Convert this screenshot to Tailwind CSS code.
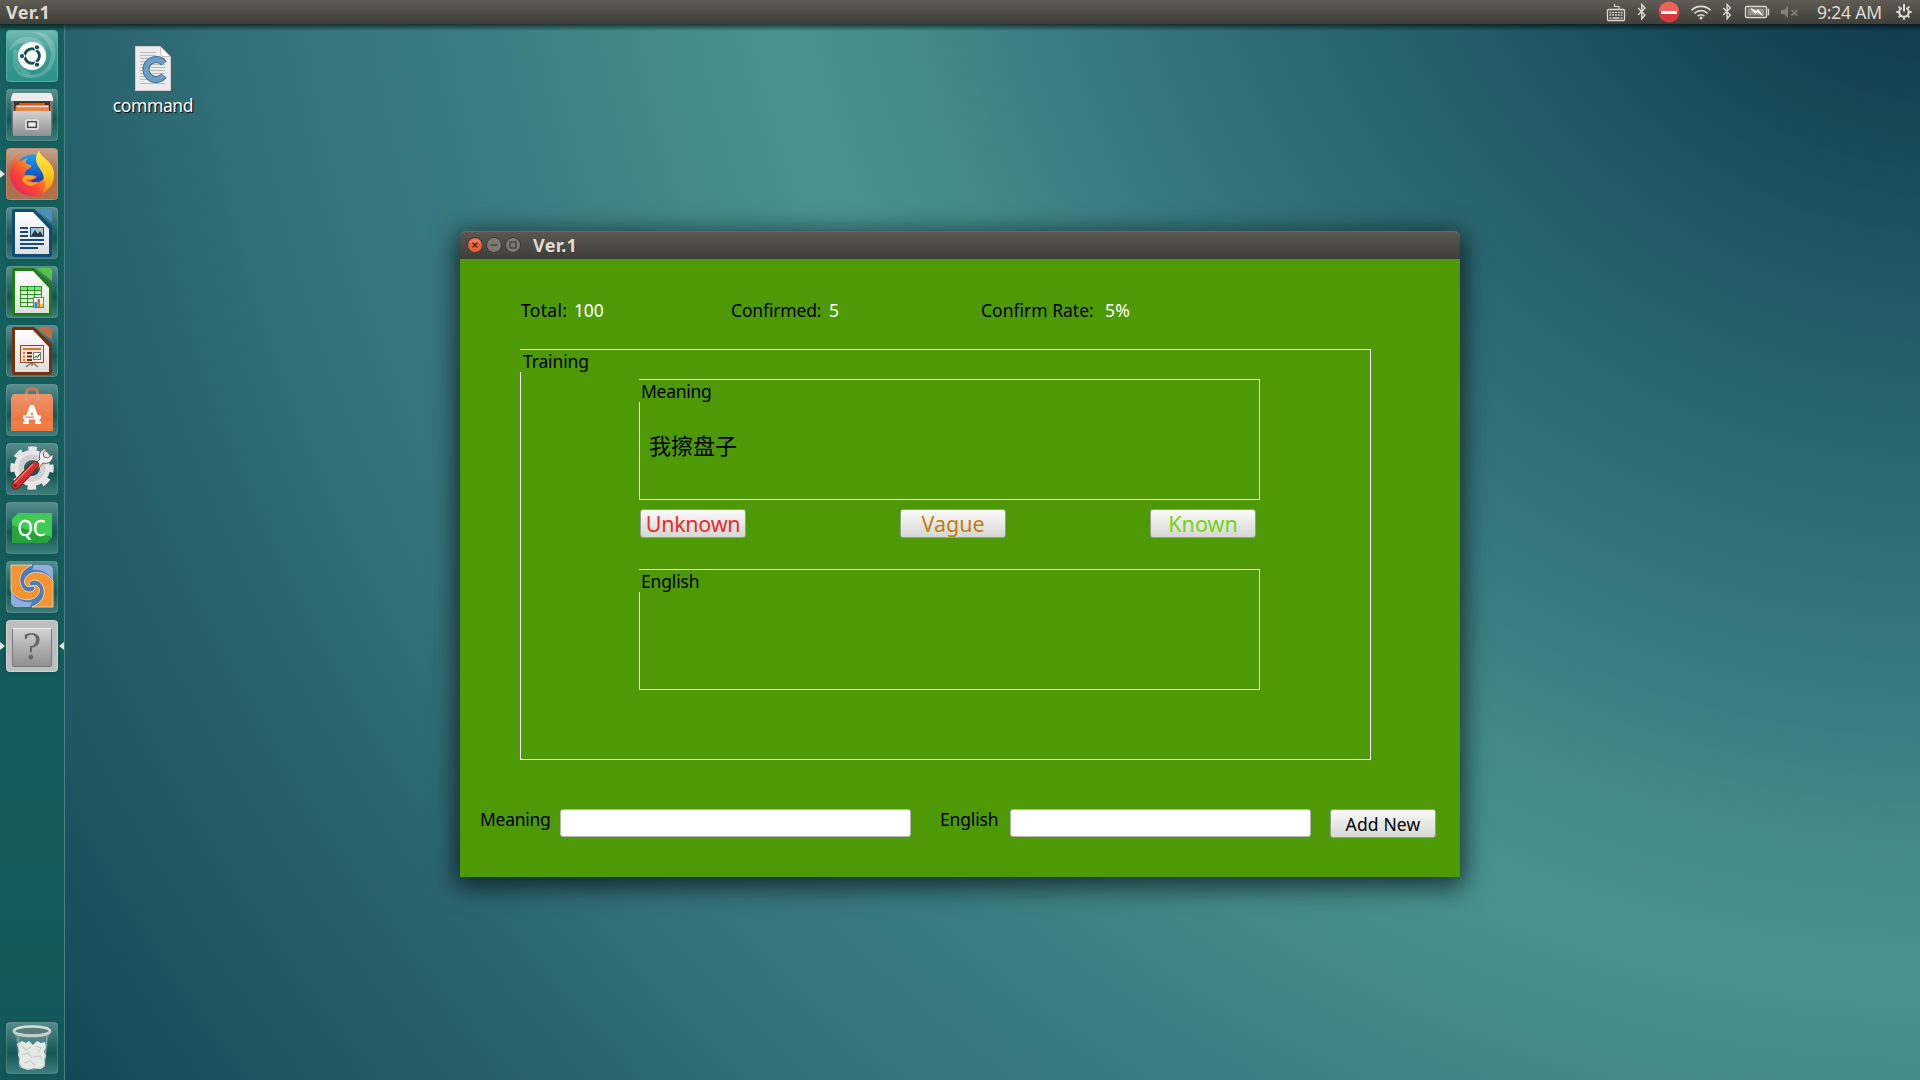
<!DOCTYPE html>
<html lang="en">
<head>
<meta charset="utf-8">
<title>Ver.1</title>
<script src="https://cdn.jsdelivr.net/npm/@tailwindcss/browser@4"></script>
</head>
<body class="w-[1920px] h-[1080px] overflow-hidden flex flex-col font-['Noto_Sans','Noto_Sans_CJK_SC',sans-serif] text-[17.5px] leading-5 text-black bg-[radial-gradient(circle_at_1953px_-218px,#113e4f_250px,#164856_350px,#1e5563_470px,#26616b_600px,#2f6c73_745px,#3a7d81_936px,#428987_1050px,#48938f_1196px,#438a88_1330px,#3a7c80_1513px,#34727a_1716px,#28626c_1905px,#205862_2080px,#1a505e_2184px,#144857_2292px)]">

<header class="h-6 shrink-0 flex items-center justify-between pl-[6px] pr-[8px] bg-gradient-to-b from-[#5e5c53] to-[#3f3e3a] text-[#dfdbd2]">
  <span class="font-bold text-[18px] tracking-[0.3px]">Ver.1</span>
  <div class="flex items-center h-6">
    <svg class="w-[310px] h-6" viewBox="1590 0 310 24" fill="none">
      <g stroke="#dfdbd2">
        <path d="M1614.500 4v2.500h4.500v3" stroke-width="1.200"/>
        <rect x="1607.500" y="9.500" width="17" height="11" rx="1" stroke-width="1.300"/>
        <path d="M1609.500 12.500h13M1609.500 15h13" stroke-width="1.600" stroke-dasharray="1.800 1"/>
        <path d="M1609.500 18h2M1612.500 18h7M1620.500 18h2" stroke-width="1.500"/>
        <path d="M1638 8l7 7-3.200 3.800V4.500l3.200 3.500-7 7" stroke-width="1.400"/>
        <path d="M1723.300 8l7 7-3.200 3.800V4.500l3.200 3.500-7 7" stroke-width="1.400"/>
      </g>
      <circle cx="1669" cy="12" r="10.500" fill="#d93a37"/>
      <path d="M1659 11a10 9.500 0 0 1 20 0z" fill="#ef7568" opacity=".7"/>
      <rect x="1661" y="11" width="16" height="3" fill="#fff"/>
      <g stroke="#dfdbd2" stroke-width="1.700">
        <path d="M1691.500 10.300a13.500 13.500 0 0 1 19 0M1694.500 13.300a9.300 9.300 0 0 1 13 0M1697.600 16.200a5 5 0 0 1 6.800 0"/>
      </g>
      <circle cx="1701" cy="18" r="1.500" fill="#dfdbd2"/>
      <rect x="1745.500" y="6.500" width="21" height="11" rx="1.500" stroke="#dfdbd2" stroke-width="1.400"/>
      <path d="M1767.500 9.500h1v5h-1" stroke="#dfdbd2" stroke-width="1.300"/>
      <rect x="1747.500" y="8.500" width="17" height="7" fill="#96938b"/>
      <path d="M1751 8.500l4.500 5 1.500-2 5.500 4-4.500-6-1.500 2z" fill="#fff" stroke="#fff" stroke-width=".8"/>
      <path d="M1781 10h3l4-4v12l-4-4h-3z" fill="#85827b"/>
      <path d="M1791.500 10l5.500 5.500m0-5.500l-5.500 5.500" stroke="#85827b" stroke-width="1.700"/>
    </svg>
    <span class="-ml-[83px] w-[79px] text-[17.5px] tracking-[-0.2px] whitespace-nowrap">9:24 AM</span>
    <svg class="w-4 h-4" viewBox="0 0 16 16" fill="none" stroke="#dfdbd2">
      <path d="M5.700 3.800a4.800 4.800 0 1 0 4.600 0" stroke-width="2"/>
      <path d="M8 0v7.500" stroke-width="2"/>
      <path d="M4.200 4.200L2.600 2.600m9.200 1.600l1.600-1.600M3 8H.3m12.700 0h2.700M4.500 11.500L2.700 13.300m8.800-1.800l1.800 1.800M8 13v2.700" stroke-width="1.900"/>
    </svg>
  </div>
</header>

<main class="flex-1 min-h-0 flex">
  <div class="absolute top-6 left-0 w-full h-[7px] bg-gradient-to-b from-black/60 to-transparent"></div>

  <nav class="w-[65px] shrink-0 border-r border-[#4a8186] bg-gradient-to-b from-[#16615f] to-[#125858] flex flex-col pt-[6px] pb-[6px] pl-[6px] gap-[7px]">
    <svg width="0" height="0" class="absolute">
      <defs>
        <linearGradient id="tile" x1="0" y1="0" x2="0" y2="1"><stop offset="0" stop-color="#6fa09f" stop-opacity=".75"/><stop offset=".42" stop-color="#276a6b" stop-opacity=".8"/><stop offset=".6" stop-color="#155553"/><stop offset="1" stop-color="#3d7f7d"/></linearGradient>
        <linearGradient id="dash" x1="0" y1="0" x2="0" y2="1"><stop offset="0" stop-color="#74b9b3"/><stop offset=".45" stop-color="#3b9c94"/><stop offset="1" stop-color="#2b9389"/></linearGradient>
        <linearGradient id="fox" x1="0" y1="0" x2="0" y2="1"><stop offset="0" stop-color="#c7a493"/><stop offset=".45" stop-color="#ac6f4f"/><stop offset="1" stop-color="#b0704b"/></linearGradient>
        <linearGradient id="metal" x1="0" y1="0" x2="0" y2="1"><stop offset="0" stop-color="#d2d2d2"/><stop offset="1" stop-color="#8f8f8f"/></linearGradient>
        <linearGradient id="page" x1="0" y1="0" x2="0" y2="1"><stop offset="0" stop-color="#fff"/><stop offset="1" stop-color="#dedede"/></linearGradient>
        <linearGradient id="foxbody" x1="1" y1="0" x2="0" y2="1"><stop offset="0" stop-color="#ffd83a"/><stop offset=".35" stop-color="#ff9a1f"/><stop offset=".65" stop-color="#fb4236"/><stop offset="1" stop-color="#d81b78"/></linearGradient>
        <linearGradient id="globe" x1="0" y1="0" x2="0" y2="1"><stop offset="0" stop-color="#1aa0f5"/><stop offset=".6" stop-color="#1258c8"/><stop offset="1" stop-color="#34158a"/></linearGradient>
        <linearGradient id="flame" x1="0" y1="0" x2="0" y2="1"><stop offset="0" stop-color="#fff04a"/><stop offset=".6" stop-color="#ffc41e"/><stop offset="1" stop-color="#ff8f1c"/></linearGradient>
        <linearGradient id="bag" x1="0" y1="0" x2="0" y2="1"><stop offset="0" stop-color="#f09468"/><stop offset="1" stop-color="#ea6a35"/></linearGradient>
      </defs>
    </svg>

    <!-- Dash -->
    <svg class="w-[52px] h-[52px] shrink-0 drop-shadow-sm" viewBox="0 0 52 52">
      <rect x=".5" y=".5" width="51" height="51" rx="3" fill="url(#dash)" stroke="#5db0a8"/>
      <path d="M3 22C6 9 18 4 29 8c10 4 14 15 10 26-1-10-5-17-14-20C16 11 8 14 3 22z" fill="#fff" opacity=".2"/>
      <path d="M8 24c-3 12 6 22 19 21 10-1 17-8 18-20C44 12 36 4 26 2c18-1 26 12 23 26-2 12-12 20-24 20C12 48 4 37 8 24z" fill="#fff" opacity=".2"/>
      <path d="M10 20c-2 10 2 20 14 25" stroke="#fff" stroke-opacity=".16" stroke-width="5" fill="none"/>
      <circle cx="26" cy="26" r="14" fill="#fff"/>
      <circle cx="26" cy="26" r="7.300" fill="none" stroke="#185351" stroke-width="3"/>
      <path d="M26 26H17M26 26l5-9M26 26l5 9" stroke="#fff" stroke-width="1.200"/>
      <g fill="#185351" stroke="#fff"><circle cx="16" cy="26" r="2.600"/><circle cx="31" cy="17.300" r="2.600"/><circle cx="31" cy="34.700" r="2.600"/></g>
      <circle cx="26" cy="26" r="5.500" fill="#fff"/>
    </svg>

    <!-- Files -->
    <svg class="w-[52px] h-[52px] shrink-0 drop-shadow-sm" viewBox="0 0 52 52">
      <rect x=".5" y=".5" width="51" height="51" rx="3" fill="url(#tile)" stroke="#fff" stroke-opacity=".2"/>
      <path d="M5 8h42l-1 36H6z" fill="#777"/>
      <path d="M7 4h38l2 5v3H5V9z" fill="#ececec"/>
      <path d="M8 12h36v12H8z" fill="#3e3937"/>
      <path d="M13 14h26v3H13z" fill="#cf5b1e"/><path d="M10 16h33v8H9z" fill="#e9833f"/><path d="M11 17.500h31" stroke="#fbe3cf" stroke-width="1.300"/>
      <rect x="7" y="22" width="38" height="25" fill="url(#metal)"/>
      <rect x="19" y="30" width="14" height="11" rx="2" fill="#d9d9d9"/>
      <rect x="21.700" y="32.700" width="8.600" height="5.600" fill="#eee" stroke="#444" stroke-width="1.300"/>
    </svg>

    <!-- Firefox -->
    <div class="relative w-[52px] h-[52px] shrink-0">
      <svg class="absolute -left-[6px] top-[22px] w-[5px] h-2" viewBox="0 0 5 8"><path d="M0 0l5 4-5 4z" fill="#dfe3e1"/></svg>
      <svg class="w-[52px] h-[52px] drop-shadow-sm" viewBox="0 0 52 52">
        <rect x=".5" y=".5" width="51" height="51" rx="3" fill="url(#fox)" stroke="#bd8d73"/>
        <circle cx="27" cy="24" r="17.500" fill="url(#globe)"/>
        <path d="M5 20c0-5 2-9 6-12 0 3 1 5 2 6 3-2 6-3 9-4-2 2-3 4-2 6l5 1c1 2-2 4-5 5 0 3-2 3-1 5 3 3 8-1 11 1 2 2-3 4-6 4 5 5 14 2 15-5 1-9-7-13-6-20 9 5 14 10 15 20 0 12-9 21-21 21C14 48 4 38 4 26z" fill="url(#foxbody)"/>
        <path d="M33 3c2 7 14 10 15 22 0 9-5 16-12 20 5-6 4-11 2-14-1-10-8-12-8-20 0-3 1-6 3-8z" fill="url(#flame)"/>
        <path d="M18 28c4-2 8-1 11 1-2 3-6 2-9 3 3 3 8 4 12 1-3 7-12 6-16-1z" fill="#ffa424"/>
      </svg>
    </div>

    <!-- Writer -->
    <svg class="w-[52px] h-[52px] shrink-0 drop-shadow-sm" viewBox="0 0 52 52">
      <rect x=".5" y=".5" width="51" height="51" rx="3" fill="url(#tile)" stroke="#fff" stroke-opacity=".2"/>
      <path d="M6 4q0-2 2-2h20l18 17v28q0 3-3 3H9q-3 0-3-3z" fill="#0f4a79"/>
      <path d="M30 2h14q2 0 2 2v11z" fill="#4a8dbf"/>
      <path d="M9 5h18l16 17v25H9z" fill="url(#page)"/>
      <path d="M14 21h8M14 25h8M14 29h8M14 33h24M14 37h24M14 41h18" stroke="#1a4b78" stroke-width="2"/>
      <rect x="24.500" y="20.500" width="13" height="9" fill="#92c6ea" stroke="#1a4b78"/><path d="M25 29l4-6 3 4 2-3 3 5z" fill="#333"/><circle cx="35.500" cy="22.500" r="1.500" fill="#e9c43c"/>
    </svg>

    <!-- Calc -->
    <svg class="w-[52px] h-[52px] shrink-0 drop-shadow-sm" viewBox="0 0 52 52">
      <rect x=".5" y=".5" width="51" height="51" rx="3" fill="url(#tile)" stroke="#fff" stroke-opacity=".2"/>
      <path d="M6 4q0-2 2-2h20l18 17v28q0 3-3 3H9q-3 0-3-3z" fill="#1d7d12"/>
      <path d="M30 2h14q2 0 2 2v11z" fill="#55c241"/>
      <path d="M9 5h18l16 17v25H9z" fill="url(#page)"/>
      <rect x="14" y="20" width="22" height="21" fill="#1e9a10"/>
      <path d="M15 22.500h20" stroke="#8fdd86" stroke-width="3" stroke-dasharray="6 1"/>
      <path d="M15 26.500h20M15 30.500h20M15 34.500h20M15 38.500h20" stroke="#e6f7e3" stroke-width="3" stroke-dasharray="6 1"/>
      <rect x="27.500" y="31.500" width="10" height="10" fill="#fff" stroke="#777"/><path d="M28.500 36h2.700v5h-2.700z" fill="#2b86d1"/><path d="M31.500 33h2.700v8h-2.700z" fill="#e36a26"/><path d="M34.500 38h2.500v3h-2.500z" fill="#f0bd17"/>
    </svg>

    <!-- Impress -->
    <svg class="w-[52px] h-[52px] shrink-0 drop-shadow-sm" viewBox="0 0 52 52">
      <rect x=".5" y=".5" width="51" height="51" rx="3" fill="url(#tile)" stroke="#fff" stroke-opacity=".2"/>
      <path d="M6 4q0-2 2-2h20l18 17v28q0 3-3 3H9q-3 0-3-3z" fill="#7a2f0c"/>
      <path d="M30 2h14q2 0 2 2v11z" fill="#c56a44"/>
      <path d="M9 5h18l16 17v25H9z" fill="url(#page)"/>
      <rect x="14.500" y="20.500" width="23" height="17" fill="#f8e6da" stroke="#9a4416"/>
      <path d="M17 24h18" stroke="#e0702f" stroke-width="2"/>
      <path d="M17 28h2M17 31.500h2M17 35h2" stroke="#e0702f" stroke-width="2"/><path d="M21 28h5M21 31.500h5M21 35h5" stroke="#7a2f0c" stroke-width="2"/>
      <rect x="27.500" y="27.500" width="7" height="7" fill="#fff" stroke="#777"/><path d="M28.500 33l2-2 1 1 2.500-3" stroke="#2a9a28" stroke-width="1.200" fill="none"/>
      <path d="M26 38v3M25 38l-5 4M27 38l5 4" stroke="#777" stroke-width="1.600"/>
    </svg>

    <!-- Software centre -->
    <svg class="w-[52px] h-[52px] shrink-0 drop-shadow-sm" viewBox="0 0 52 52">
      <rect x=".5" y=".5" width="51" height="51" rx="3" fill="url(#tile)" stroke="#fff" stroke-opacity=".2"/>
      <path d="M20.500 17V9q0-4 4-4h3q4 0 4 4v8" fill="none" stroke="#d07550" stroke-width="3"/>
      <path d="M7 10h38l2 4v33H5V14z" fill="url(#bag)"/>
      <path d="M5 37h42v10H5z" fill="#f9824a" opacity=".6"/>
      <path d="M20.500 17V10M31.500 17V10" stroke="#e89a7c" stroke-width="3"/>
      <path d="M20 38l5.500-15h1L32 38" stroke="#fff" stroke-width="4" fill="none"/>
      <rect x="17" y="31" width="18" height="4.500" rx="2" fill="#fff"/><path d="M19 33.200h9" stroke="#eb7340" stroke-width="1.200"/>
      <path d="M17 38.800h6M29 38.800h6" stroke="#fff" stroke-width="2.500"/>
    </svg>

    <!-- Settings -->
    <svg class="w-[52px] h-[52px] shrink-0 drop-shadow-sm" viewBox="0 0 52 52">
      <rect x=".5" y=".5" width="51" height="51" rx="3" fill="url(#tile)" stroke="#fff" stroke-opacity=".2"/>
      <circle cx="26" cy="25" r="19.500" fill="none" stroke="#e6e6e6" stroke-width="4.500" stroke-dasharray="8.700 6.615" stroke-dashoffset="4.350"/>
      <circle cx="26" cy="25" r="13" fill="none" stroke="#e6e6e6" stroke-width="10"/>
      <circle cx="26" cy="25" r="11" fill="none" stroke="#cfcfcf" stroke-width="5"/>
      <path d="M28 22l6-6c-2-5 1-10 7-11l-4 5 1 4 4 1 5-4c1 6-4 11-10 9l-5 6z" fill="#f2f2f2" stroke="#555" stroke-width=".9"/>
      <path d="M9.500 42.500L29 22" stroke="#871a1a" stroke-width="8.500" stroke-linecap="round"/>
      <path d="M9.500 42.500L29 22" stroke="#d03232" stroke-width="6.500" stroke-linecap="round"/>
      <path d="M9 39.500L26.500 21.500" stroke="#ee7774" stroke-width="1.500" stroke-linecap="round"/>
      <circle cx="9.500" cy="42.500" r="1.300" fill="#541010"/>
    </svg>

    <!-- Qt Creator -->
    <svg class="w-[52px] h-[52px] shrink-0 drop-shadow-sm" viewBox="0 0 52 52">
      <rect x=".5" y=".5" width="51" height="51" rx="3" fill="url(#tile)" stroke="#fff" stroke-opacity=".2"/>
      <path d="M12 11h34v24l-6 6H6V17z" fill="#3fcb53"/>
      <path d="M6 23l40 12-6 6H6z" fill="#25a43b"/>
      <text x="11.500" y="33.700" font-family="Noto Sans" font-size="21" fill="#fff" stroke="#fff" stroke-width=".3" textLength="28" lengthAdjust="spacingAndGlyphs">QC</text>
    </svg>

    <!-- Swirl -->
    <svg class="w-[52px] h-[52px] shrink-0 drop-shadow-sm" viewBox="0 0 52 52">
      <rect x=".5" y=".5" width="51" height="51" rx="3" fill="url(#tile)" stroke="#fff" stroke-opacity=".2"/>
      <path d="M5 4h36q6 0 6 6v36H11q-6 0-6-6z" fill="#4d7cbb"/>
      <path d="M28 4h13q6 0 6 6v10C43 12 36 8 26 9zM5 30c4 8 11 12 21 11l-2 5H11q-6 0-6-6z" fill="#8fb0dc"/>
      <g fill="#f5932f" stroke="#f8dfc0" stroke-width=".8">
        <path d="M5 4H26C17 8 13 14 14 21C15 29 22 33 27 30C30 28 29 25 26 25C33 22 36 30 31 35C25 41 12 40 5 30Z"/>
        <path transform="rotate(180 26 25)" d="M5 4H26C17 8 13 14 14 21C15 29 22 33 27 30C30 28 29 25 26 25C33 22 36 30 31 35C25 41 12 40 5 30Z"/>
      </g>
    </svg>

    <!-- Unknown running program -->
    <div class="relative w-[52px] h-[52px] shrink-0">
      <svg class="absolute -left-[6px] top-[22px] w-[5px] h-2" viewBox="0 0 5 8"><path d="M0 0l5 4-5 4z" fill="#dfe3e1"/></svg>
      <svg class="absolute left-[53px] top-[22px] w-[5px] h-2" viewBox="0 0 5 8"><path d="M5 0L0 4l5 4z" fill="#dfe3e1"/></svg>
      <svg class="w-[52px] h-[52px] drop-shadow-sm" viewBox="0 0 52 52">
        <rect x=".5" y=".5" width="51" height="51" rx="3" fill="#bcbfbe" stroke="#d2d5d4"/>
        <rect x="6.500" y="8.500" width="39" height="38" rx="1" fill="url(#metal)" stroke="#777"/>
        <path d="M7 8.500h38" stroke="#eee"/>
        <text x="26" y="39" text-anchor="middle" font-family="DejaVu Serif" font-size="35" fill="#666">?</text>
      </svg>
    </div>

    <!-- Trash -->
    <svg class="mt-auto w-[52px] h-[52px] shrink-0 drop-shadow-sm" viewBox="0 0 52 52">
      <rect x=".5" y=".5" width="51" height="51" rx="3" fill="url(#tile)" stroke="#fff" stroke-opacity=".2"/>
      <path d="M9 11h34l-4 34q-13 5-26 0z" fill="#9cc4c2" opacity=".3"/>
      <path d="M11 22l5-3 4 2 3-2 4 4 4-4 4 2 4-1 1 5-2 5 2 4-2 4 1 5-4 4-7-1-6 2-6-2-3-5 1-4-2-4 1-4z" fill="#e6e8e5"/>
      <path d="M16 24l4 4 5-3M30 24l5 2-3 5M16 33l6-2 4 5M28 35l6-1 2 4M18 41l6-2 5 4" fill="none" stroke="#c9ccc8" stroke-width="1.200"/>
      <path d="M12 14l2 31q12 4 24 0l3-31" fill="none" stroke="#b9d6d3" stroke-opacity=".6"/>
      <ellipse cx="26" cy="9" rx="18" ry="4.500" fill="#547f7d" stroke="#dcdcdc" stroke-width="2.500"/>
      <path d="M8 9q0 5 18 5t18-5" fill="none" stroke="#c9cbca" stroke-width="2.500"/>
    </svg>
  </nav>

  <section class="flex-1 relative">
    <figure class="absolute left-[38px] top-[22px] w-[100px] flex flex-col items-center">
      <svg class="w-9 h-[45px]" viewBox="0 0 36 45">
        <path d="M.5.500h25l10 10v34H.5z" fill="#ececec" stroke="#cfcfcf"/>
        <path d="M25.500.500v7q0 3 3 3h7z" fill="#fff" stroke="#b5b5b5" stroke-width=".8"/>
        <path d="M5 6.500h16M5 9.500h16M5 12.500h25M5 15.500h25M5 18.500h25M5 21.500h25M5 24.500h25M5 27.500h25M5 30.500h25M5 33.500h25M5 37.500h25" stroke="#bbb"/>
        <path d="M29 17.500a10 10 0 1 0 0 12" fill="none" stroke="#41708f" stroke-width="7"/>
        <path d="M29 17.500a10 10 0 1 0 0 12" fill="none" stroke="#6c9fc4" stroke-width="5"/>
      </svg>
      <figcaption class="mt-[4px] text-white tracking-[-0.4px] [text-shadow:1px_1px_1px_#000]">command</figcaption>
    </figure>

    <!-- Application window -->
    <div class="absolute left-[395px] top-[207px] w-[1000px] h-[646px] flex flex-col rounded-t-md shadow-[0_6px_26px_4px_rgba(0,0,0,0.65)]">
      <div class="h-7 shrink-0 flex items-center rounded-t-md bg-gradient-to-b from-[#5a5850] to-[#3e3d39] shadow-[inset_0_1px_0_#6b6960] pl-[7px] gap-[3px] text-[#dfdbd2]">
        <svg class="w-4 h-4" viewBox="0 0 16 16"><circle cx="8" cy="8" r="7.500" fill="#ec6038" stroke="#3a3935"/><path d="M2 6a6.500 6.500 0 0 1 12 0z" fill="#f59a78" opacity=".5"/><path d="M5.500 5.500l5 5m0-5l-5 5" stroke="#44241a" stroke-width="1.200"/></svg>
        <svg class="w-4 h-4" viewBox="0 0 16 16"><circle cx="8" cy="8" r="7.500" fill="#7d7b74" stroke="#3a3935"/><path d="M4.500 8h7" stroke="#3a3935" stroke-width="1.200"/></svg>
        <svg class="w-4 h-4" viewBox="0 0 16 16"><circle cx="8" cy="8" r="7.500" fill="#7d7b74" stroke="#3a3935"/><rect x="5" y="5" width="6" height="6" fill="none" stroke="#3a3935" stroke-width="1.200"/></svg>
        <span class="ml-[9px] font-bold text-[18px] tracking-[0.3px]">Ver.1</span>
      </div>

      <div class="flex-1 bg-[#4e9a06] pt-[41px] whitespace-nowrap tracking-[-0.15px]">
        <div class="flex pl-[61px]">
          <span class="w-[53px] tracking-[0.3px]">Total:</span>
          <span class="w-[157px] text-white">100</span>
          <span class="w-[98px]">Confirmed:</span>
          <span class="w-[152px] text-white">5</span>
          <span class="w-[124px] tracking-normal">Confirm Rate:</span>
          <span class="text-white tracking-[0.3px]">5%</span>
        </div>

        <div class="mt-[29px] ml-[60px] w-[851px] h-[411px] border border-white">
          <div class="-ml-px w-[70px] h-[22px] pl-[3px] pt-px bg-[#4e9a06]">Training</div>
          <div class="mt-[7px] ml-[118px] w-[621px] h-[121px] border border-white">
            <div class="-ml-px w-[76px] h-[22px] pl-[2px] pt-px bg-[#4e9a06] tracking-[-0.3px]">Meaning</div>
            <p class="mt-[30px] ml-[9px] text-[22px] leading-6 tracking-normal font-['Noto_Sans_CJK_SC',sans-serif]">我擦盘子</p>
          </div>
          <div class="flex mt-[9px] ml-[119px] text-[21.500px] leading-[26px] tracking-[-0.3px]">
            <button class="w-[106px] h-[29px] rounded-[3px] border border-[#9a9a94] bg-gradient-to-b from-[#fbfbfa] to-[#d5d7d2] text-[#ef2929]">Unknown</button>
            <button class="ml-[154px] w-[106px] h-[29px] rounded-[3px] border border-[#9a9a94] bg-gradient-to-b from-[#fbfbfa] to-[#d5d7d2] text-[#c17d11] tracking-normal">Vague</button>
            <button class="ml-[144px] w-[106px] h-[29px] rounded-[3px] border border-[#9a9a94] bg-gradient-to-b from-[#fbfbfa] to-[#d5d7d2] text-[#73d216] tracking-normal">Known</button>
          </div>
          <div class="mt-[31px] ml-[118px] w-[621px] h-[121px] border border-white">
            <div class="-ml-px w-[64px] h-[22px] pl-[2px] pt-px bg-[#4e9a06]">English</div>
          </div>
        </div>

        <div class="mt-[49px] pl-[20px] flex items-start">
          <span class="w-[80px] tracking-[-0.3px]">Meaning</span>
          <input class="w-[351px] h-7 rounded-[3px] bg-white border border-[#b4b2ad]">
          <span class="ml-[29px] w-[70px]">English</span>
          <input class="w-[301px] h-7 rounded-[3px] bg-white border border-[#b4b2ad]">
          <button class="ml-[19px] w-[106px] h-[29px] rounded-[3px] border border-[#9a9a94] bg-gradient-to-b from-[#fbfbfa] to-[#d5d7d2] tracking-[0.15px]">Add New</button>
        </div>
      </div>
    </div>
  </section>
</main>
</body>
</html>
